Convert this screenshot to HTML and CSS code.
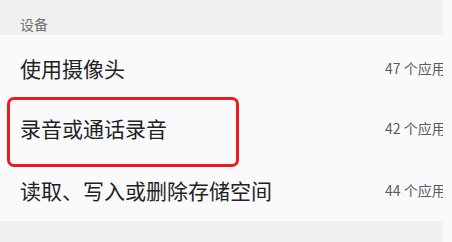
FILE: index.html
```html
<!DOCTYPE html>
<html lang="zh-CN">
<head>
<meta charset="utf-8">
<link rel="stylesheet" href="styles.css">
</head>
<body>
<div class="screen">
  <div class="section-head">设备</div>
  <div class="list">
    <div class="row"><span class="label">使用摄像头</span><span class="count">47 个应用</span></div>
    <div class="row"><span class="label">录音或通话录音</span><span class="count">42 个应用</span></div>
    <div class="row"><span class="label">读取、写入或删除存储空间</span><span class="count">44 个应用</span></div>
  </div>
  <div class="section-foot"></div>
  <div class="highlight"></div>
</div>
</body>
</html>
```
FILE: styles.css
```css
html, body {
  margin: 0;
  padding: 0;
  background: #f9f9fb;
}
body {
  font-family: "Noto Sans CJK SC", "Noto Sans", sans-serif;
  width: 452px;
  height: 242px;
  overflow: hidden;
}
.screen {
  position: relative;
  width: 443px;
  height: 242px;
  overflow: hidden;
}
.section-head {
  height: 35px;
  background: #f0f0f2;
  box-sizing: border-box;
  padding: 14px 0 0 20px;
  font-size: 14px;
  line-height: 20px;
  color: #707070;
}
.list {
  background: #fafafc;
}
.row {
  height: 62px;
  display: flex;
  align-items: center;
  justify-content: space-between;
  padding-left: 20px;
  box-sizing: border-box;
}
.row:first-child {
  padding-top: 4px;
}
.label {
  font-size: 21px;
  color: #222;
  white-space: nowrap;
}
.count {
  font-size: 14px;
  color: #5a5a5a;
  white-space: nowrap;
  margin-right: -7px;
  width: 65px;
}
.section-foot {
  height: 25px;
  background: #f0f0f2;
}
.highlight {
  position: absolute;
  left: 7px;
  top: 97px;
  width: 232px;
  height: 70px;
  box-sizing: border-box;
  border: 3px solid #ec1c1c;
  border-radius: 7px;
}
```
